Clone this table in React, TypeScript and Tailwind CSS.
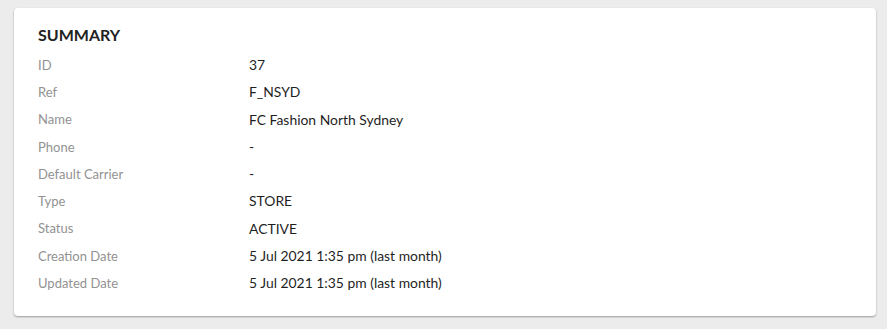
import React from "react";

const rows: [string, string][] = [
  ["ID", "37"],
  ["Ref", "F_NSYD"],
  ["Name", "FC Fashion North Sydney"],
  ["Phone", "-"],
  ["Default Carrier", "-"],
  ["Type", "STORE"],
  ["Status", "ACTIVE"],
  ["Creation Date", "5 Jul 2021 1:35 pm (last month)"],
  ["Updated Date", "5 Jul 2021 1:35 pm (last month)"],
];

export default function App() {
  return (
    <div
      className="min-h-[329px] w-full bg-[#ececec] pt-[8px] pl-[14px] pr-[11px] pb-[13px]"
      style={{ fontFamily: "Lato, 'Open Sans', sans-serif" }}
    >
      <div className="rounded-[4px] bg-white px-[24px] pt-[17px] pb-[19px] shadow-[0_1px_2px_rgba(0,0,0,0.35)]">
        <h2 className="text-[16px] font-bold leading-[20px] text-[#222] mb-[7px]">SUMMARY</h2>
        <div className="flex flex-col">
          {rows.map(([k, v]) => (
            <div key={k} className="flex h-[27.25px] items-center">
              <div className="w-[211px] text-[13px] text-[#929292]">{k}</div>
              <div className="text-[13.9px] text-[#1f1f1f]">{v}</div>
            </div>
          ))}
        </div>
      </div>
    </div>
  );
}
